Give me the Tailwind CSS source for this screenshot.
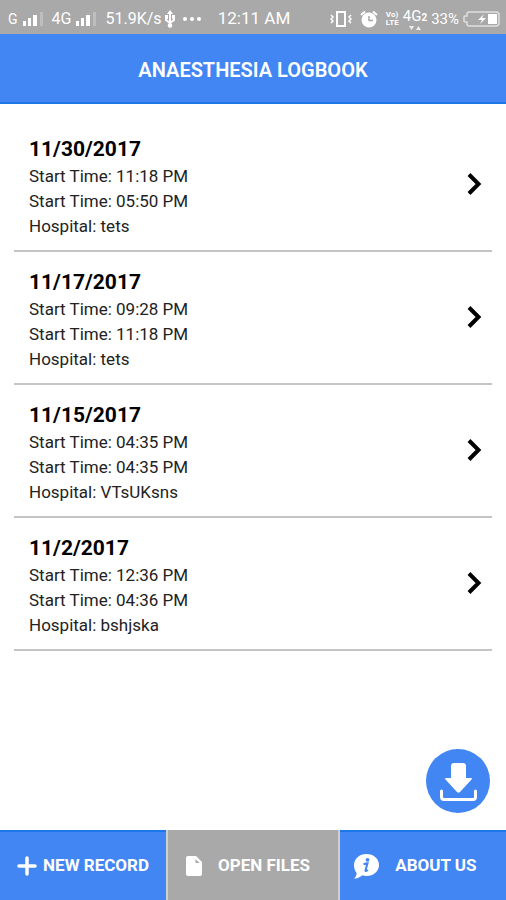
<!DOCTYPE html>
<html lang="en">
<head>
    <meta charset="UTF-8">
    <meta name="viewport" content="width=device-width, initial-scale=1.0">
    <title>Anaesthesia Logbook</title>
    <script src="https://cdn.jsdelivr.net/npm/@tailwindcss/browser@4"></script>
</head>
<body class="flex flex-col min-h-screen bg-white font-['Roboto',sans-serif] text-black">
    <!-- Status bar -->
    <div class="flex items-center h-[34px] pt-1 pl-2 pr-1.5 bg-[#a9a9a9] text-white">
        <div class="flex flex-1 items-center gap-2">
            <div class="flex items-center gap-1">
                <span class="text-sm">G</span>
                <svg class="w-[22px] h-4" viewBox="0 0 22 16" fill="currentColor"><path d="M1 10h3v5H1zM6 7h3v8H6zM11 4h4v11h-4z"/><path d="M18 1h3v14h-3z" opacity=".25"/></svg>
            </div>
            <div class="flex items-center gap-1">
                <span class="text-base">4G</span>
                <svg class="w-[22px] h-4" viewBox="0 0 22 16" fill="currentColor"><path d="M1 10h3v5H1zM6 7h3v8H6zM11 4h4v11h-4z"/><path d="M18 1h3v14h-3z" opacity=".25"/></svg>
            </div>
            <div class="flex items-center gap-0.5">
                <span class="text-base">51.9K/s</span>
                <svg class="w-3 h-[18px]" viewBox="0 0 12 18" fill="none" stroke="currentColor" stroke-width="2"><path d="M6 3v12M2 7v3l4 3 4-3V7"/><path d="M6 0l3 4H3zM1 5h3v4H1zM8 5h3v4H8z" fill="currentColor" stroke="none"/><circle cx="6" cy="15.500" r="2.300" fill="currentColor" stroke="none"/></svg>
                <svg class="w-5 h-4 ml-1" viewBox="0 0 20 16" fill="currentColor"><circle cx="3" cy="8" r="2"/><circle cx="10" cy="8" r="2"/><circle cx="17" cy="8" r="2"/></svg>
            </div>
        </div>
        <span class="text-[17px]">12:11 AM</span>
        <div class="flex flex-1 items-center justify-end gap-1">
            <svg class="w-[22px] h-4 mr-1" viewBox="0 0 22 16" fill="none" stroke="currentColor" stroke-width="2"><path d="M7 1h8v14H7z"/><path d="M1 4l2 2-2 2 2 2-2 2M21 4l-2 2 2 2-2 2 2 2" stroke-width="1.500"/></svg>
            <svg class="w-[18px] h-[18px]" viewBox="0 0 18 18"><circle cx="9" cy="10" r="7.500" fill="currentColor"/><path d="M1 5l4-3.500M17 5l-4-3.500" stroke="currentColor" stroke-width="2"/><path d="M9 6v4.500h4" fill="none" stroke="#a9a9a9" stroke-width="1.500"/></svg>
            <span class="flex flex-col ml-1 text-[8px] leading-[8px] font-bold"><span>Vo)</span><span>LTE</span></span>
            <span class="flex flex-col items-center">
                <span class="text-[15px] leading-4">4G<span class="text-[10px] font-bold">2</span></span>
                <svg class="w-3 h-1" viewBox="0 0 12 4" fill="currentColor"><path d="M0 0h5L2.500 4zM7 4h5L9.500 0z" opacity=".8"/></svg>
            </span>
            <span class="text-[15px]">33%</span>
            <svg class="w-[37px] h-4" viewBox="0 0 37 16"><path d="M6 1h27a3 3 0 0 1 3 3v8a3 3 0 0 1-3 3H6a2 2 0 0 1-2-2v-2H2a1 1 0 0 1-1-1V6a1 1 0 0 1 1-1h2V3a2 2 0 0 1 2-2z" fill="none" stroke="#e0e0e0" stroke-width="1.500"/><path d="M25 3h9v10h-9zM21 3l-6 6h4l-2 4 6-6h-4z" fill="currentColor"/></svg>
        </div>
    </div>

    <header class="flex items-center justify-center h-[70px] pt-1 bg-[#4286f4] border-b-2 border-[#1c78e8]">
        <h1 class="text-xl font-semibold text-white">ANAESTHESIA LOGBOOK</h1>
    </header>

    <!-- Records -->
    <main class="flex-1 px-3.5 pt-[15px]">
        <ul>
            <li class="flex items-center justify-between pt-4 pb-[11px] pl-[15px] pr-2.5 border-b-2 border-[#c4c4c4]">
                <div class="text-[17px] leading-[25px] text-[#222]">
                    <h2 class="text-[21px] leading-[29px] font-bold text-black">11/30/2017</h2>
                    <p>Start Time: 11:18 PM</p>
                    <p>Start Time: 05:50 PM</p>
                    <p>Hospital: tets</p>
                </div>
                <svg class="w-4 h-6 mb-1.5" viewBox="0 0 16 24" fill="none" stroke="currentColor" stroke-width="4"><path d="M3 2.500l9.500 9.500L3 21.500"/></svg>
            </li>
            <li class="flex items-center justify-between pt-4 pb-[11px] pl-[15px] pr-2.5 border-b-2 border-[#c4c4c4]">
                <div class="text-[17px] leading-[25px] text-[#222]">
                    <h2 class="text-[21px] leading-[29px] font-bold text-black">11/17/2017</h2>
                    <p>Start Time: 09:28 PM</p>
                    <p>Start Time: 11:18 PM</p>
                    <p>Hospital: tets</p>
                </div>
                <svg class="w-4 h-6 mb-1.5" viewBox="0 0 16 24" fill="none" stroke="currentColor" stroke-width="4"><path d="M3 2.500l9.500 9.500L3 21.500"/></svg>
            </li>
            <li class="flex items-center justify-between pt-4 pb-[11px] pl-[15px] pr-2.5 border-b-2 border-[#c4c4c4]">
                <div class="text-[17px] leading-[25px] text-[#222]">
                    <h2 class="text-[21px] leading-[29px] font-bold text-black">11/15/2017</h2>
                    <p>Start Time: 04:35 PM</p>
                    <p>Start Time: 04:35 PM</p>
                    <p>Hospital: VTsUKsns</p>
                </div>
                <svg class="w-4 h-6 mb-1.5" viewBox="0 0 16 24" fill="none" stroke="currentColor" stroke-width="4"><path d="M3 2.500l9.500 9.500L3 21.500"/></svg>
            </li>
            <li class="flex items-center justify-between pt-4 pb-[11px] pl-[15px] pr-2.5 border-b-2 border-[#c4c4c4]">
                <div class="text-[17px] leading-[25px] text-[#222]">
                    <h2 class="text-[21px] leading-[29px] font-bold text-black">11/2/2017</h2>
                    <p>Start Time: 12:36 PM</p>
                    <p>Start Time: 04:36 PM</p>
                    <p>Hospital: bshjska</p>
                </div>
                <svg class="w-4 h-6 mb-1.5" viewBox="0 0 16 24" fill="none" stroke="currentColor" stroke-width="4"><path d="M3 2.500l9.500 9.500L3 21.500"/></svg>
            </li>
        </ul>
    </main>

    <footer class="relative">
        <button type="button" aria-label="Download" class="absolute right-4 bottom-full mb-[17px] size-16 rounded-full bg-[#4286f4] text-white">
            <svg class="size-16" viewBox="0 0 64 64" fill="none"><path d="M28 14h9q3 0 3 3v12h5q2 0 .5 1.500L34 43q-1.500 1.500-3 0L19.500 30.500Q18 29 20 29h5V17q0-3 3-3z" fill="currentColor"/><path d="M15.500 42v6q0 2.500 2.500 2.500h29q2.500 0 2.500-2.500v-6" stroke="currentColor" stroke-width="3" stroke-linecap="round"/></svg>
        </button>
        <nav class="grid grid-cols-[22fr_23fr_22fr] h-[70px] text-[17px] font-bold text-white">
            <button type="button" class="flex items-center justify-center gap-1.5 bg-[#4286f4] border-t-2 border-[#1c78e8]">
                <svg class="size-5" viewBox="0 0 20 20" fill="none" stroke="currentColor" stroke-width="3.500" stroke-linecap="round"><path d="M10 2v16M2 10h16"/></svg>
                NEW RECORD
            </button>
            <button type="button" class="flex items-center justify-center gap-4 pt-0.5 pr-2.5 bg-[#a9a9a9] border-x-2 border-[#d0d0d0]">
                <svg class="w-4 h-5" viewBox="0 0 16 20"><path d="M2 0h8l6 6v12a2 2 0 0 1-2 2H2a2 2 0 0 1-2-2V2a2 2 0 0 1 2-2z" fill="currentColor"/><path d="M9.500 3v4h4z" fill="#a9a9a9"/></svg>
                OPEN FILES
            </button>
            <button type="button" class="flex items-center justify-center gap-4 pr-4 bg-[#4286f4] border-t-2 border-[#1c78e8]">
                <svg class="w-[26px] h-[25px]" viewBox="0 0 26 25"><path d="M13.500 0C20.500 0 26 4.800 26 11s-5.500 11-12.500 11c-1.500 0-3-.2-4.300-.7C7 23.500 4 25 1 24.500c1.500-1.200 2.500-3 2.700-5.200C2 17 1 14.200 1 11 1 4.800 6.500 0 13.500 0z" fill="currentColor"/><circle cx="14.500" cy="5.800" r="1.900" fill="#4286f4"/><path d="M10.500 10l4-.7-2 7q-.2 1.500 2.500-.3" fill="none" stroke="#4286f4" stroke-width="2"/></svg>
                ABOUT US
            </button>
        </nav>
    </footer>
</body>
</html>
